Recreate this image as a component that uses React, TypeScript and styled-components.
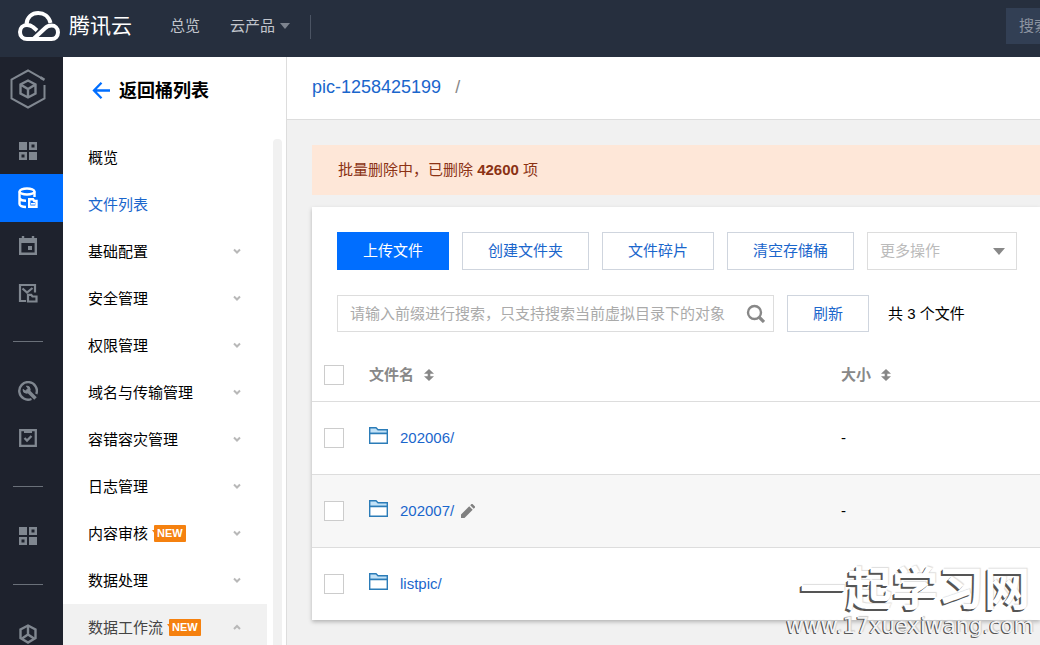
import React from "react";
import styled, { createGlobalStyle, css } from "styled-components";

const font = `"Liberation Sans", "Noto Sans CJK SC", sans-serif`;
const blue = "#006eff";
const link = "#1a66cc";

const GlobalStyle = createGlobalStyle`
  *, *::before, *::after { box-sizing: border-box; }
  body { margin: 0; background: #f1f1f1; font: 15px/20px ${font}; color: #000; }
  button, input, select { font: inherit; margin: 0; border-radius: 0; }
  a { color: inherit; text-decoration: none; }
  svg { display: block; flex: none; }
`;

const Page = styled.div`
  display: flex;
  flex-direction: column;
  height: 100vh;
  overflow: hidden;
  position: relative;
`;

const Header = styled.header`
  display: flex;
  align-items: center;
  flex: none;
  height: 57px;
  padding: 0 0 6px 18px;
  background: #262f3e;
  color: #c1c5cc;
`;

const Brand = styled.a`
  display: flex;
  align-items: center;
  gap: 9px;
  margin-right: 38px;
  font-size: 21px;
  color: #fff;
`;

const TopLink = styled.a`
  display: flex;
  align-items: center;
  gap: 5px;
  margin-right: 30px;
`;

const ProductLink = styled(TopLink)`
  margin-right: 20px;
`;

const TopDivider = styled.span`
  width: 1px;
  height: 24px;
  margin-top: 3px;
  background: #4b5463;
`;

const TopSearch = styled.input`
  width: 34px;
  height: 36px;
  margin-left: auto;
  padding: 0 0 0 13px;
  border: 0;
  background: #323f54;
  color: #fff;
  &::placeholder { color: #8c93a0; opacity: 1; }
`;

const Body = styled.div`
  display: flex;
  flex: 1;
  min-height: 0;
`;

const Rail = styled.nav`
  flex: none;
  width: 63px;
  overflow: hidden;
  background: #1e222d;
  color: #808790;
`;

const RailItem = styled.a<{ $active?: boolean; $tall?: boolean }>`
  display: flex;
  align-items: center;
  justify-content: center;
  height: ${(p) => (p.$tall ? 70 : p.$active ? 48 : 47)}px;
  padding: ${(p) => (p.$tall ? "0 7px 6px 0" : "0 7px 0 0")};
  ${(p) =>
    p.$active &&
    css`
      background: ${blue};
      color: #fff;
    `}
`;

const RailDivider = styled.hr`
  width: 30px;
  height: 1px;
  margin: 25px 0 25px 13px;
  border: 0;
  background: #6a7079;
`;

const Sidebar = styled.aside`
  display: flex;
  flex-direction: column;
  flex: none;
  width: 224px;
  border-right: 1px solid #ddd;
  background: #fff;
`;

const BackLink = styled.a`
  display: flex;
  align-items: center;
  gap: 9px;
  flex: none;
  height: 67px;
  margin-bottom: 10px;
  padding-left: 29px;
  font-size: 18px;
  line-height: 24px;
  font-weight: 700;
`;

const MenuArea = styled.div`
  display: flex;
  flex: 1;
  gap: 6px;
  min-height: 0;
  padding-right: 4px;
  overflow: hidden;
`;

const Menu = styled.ul`
  flex: 1;
  margin: 0;
  padding: 0;
  list-style: none;
`;

const MenuLink = styled.a<{ $state?: "active" | "open" }>`
  display: flex;
  align-items: center;
  height: 47px;
  padding: 0 26px 0 25px;
  color: ${(p) => (p.$state === "active" ? link : p.$state === "open" ? "#444" : "#000")};
  background: ${(p) => (p.$state === "open" ? "#f1f1f1" : "transparent")};
  svg { margin-left: auto; }
`;

const ScrollTrack = styled.div`
  width: 9px;
  margin-top: 5px;
  border-radius: 4px 4px 0 0;
  background: #f1f1f1;
`;

const NewBadge = styled.span`
  position: relative;
  height: 17px;
  margin-left: 6px;
  padding: 0 3px;
  border-radius: 1px;
  background: #f5810f;
  color: #fff;
  font-size: 11px;
  line-height: 17px;
  font-weight: 700;
  &::before {
    content: "";
    position: absolute;
    left: -2px;
    top: 5px;
    border-top: 4px solid #f5810f;
    border-left: 3px solid transparent;
  }
`;

const Main = styled.main`
  display: flex;
  flex-direction: column;
  flex: 1;
  min-width: 0;
`;

const Breadcrumb = styled.div`
  display: flex;
  align-items: center;
  gap: 14px;
  height: 63px;
  padding: 0 25px 2px;
  border-bottom: 1px solid #ddd;
  background: #fff;
  color: #888;
  font-size: 18px;
  a { color: ${link}; }
`;

const Content = styled.div`
  display: flex;
  flex-direction: column;
  gap: 12px;
  padding: 25px 0 24px 25px;
`;

const Alert = styled.div`
  padding: 15px 26px;
  background: #fee7d8;
  color: #8b3214;
`;

const Card = styled.section`
  background: #fff;
  box-shadow: 0 2px 4px rgba(0, 0, 0, 0.25);
`;

const Tools = styled.div`
  display: flex;
  flex-direction: column;
  gap: 25px;
  padding: 25px 23px 18px 25px;
`;

const ToolRow = styled.div`
  display: flex;
  align-items: center;
  gap: 13px;
`;

const Button = styled.button<{ $primary?: boolean }>`
  flex: none;
  height: 38px;
  padding: 0 25px;
  border: 1px solid ${(p) => (p.$primary ? blue : "#cfd5de")};
  background: ${(p) => (p.$primary ? blue : "#fff")};
  color: ${(p) => (p.$primary ? "#fff" : link)};
`;

const SelectBox = styled.div`
  position: relative;
  width: 150px;
  select {
    appearance: none;
    width: 100%;
    height: 38px;
    padding: 0 30px 0 12px;
    border: 1px solid #ddd;
    background: #fff;
    color: #bbb;
    opacity: 1;
  }
  svg {
    position: absolute;
    right: 12px;
    top: 16px;
    pointer-events: none;
  }
`;

const SearchBox = styled.form`
  display: flex;
  align-items: center;
  flex: 0 1 437px;
  height: 37px;
  padding: 0 8px 0 12px;
  border: 1px solid #ddd;
  input {
    flex: 1;
    min-width: 0;
    padding: 0;
    border: 0;
    outline: 0;
    background: none;
  }
  input::placeholder { color: #aaa; opacity: 1; }
  button { padding: 0; border: 0; background: none; color: #888; }
`;

const RefreshButton = styled(Button)`
  height: 37px;
`;

const Count = styled.span`
  padding-left: 6px;
`;

const Table = styled.table`
  width: 100%;
  table-layout: fixed;
  border-collapse: collapse;
  th, td { padding: 0; text-align: left; border-bottom: 1px solid #ddd; }
  th { height: 51px; color: #888; }
  td { height: 73px; }
  tbody tr:last-child td { border-bottom: 0; }
`;

const CheckCol = styled.col`
  width: 57px;
`;

const SizeCol = styled.col`
  width: 199px;
`;

const Row = styled.tr<{ $hover?: boolean }>`
  background: ${(p) => (p.$hover ? "#f7f7f7" : "#fff")};
`;

const Checkbox = styled.input`
  appearance: none;
  display: block;
  width: 20px;
  height: 20px;
  margin-left: 12px;
  border: 1px solid #ccc;
  background: #fff;
`;

const HeadLabel = styled.span`
  display: flex;
  align-items: center;
  gap: 10px;
`;

const FileCell = styled.div`
  display: flex;
  align-items: center;
  a { margin: 0 7px 0 12px; color: ${link}; }
`;

const FolderMark = styled.span`
  padding-bottom: 5px;
`;

const Watermark = styled.div`
  position: absolute;
  right: 10px;
  bottom: 7px;
  display: flex;
  flex-direction: column;
  align-items: flex-end;
  color: #fff;
  font-size: 46px;
  line-height: 50px;
  font-weight: 700;
  text-shadow: -2px 2px 0 #555, -1px 1px 0 #555, 1px -1px 1px #ddd;
  pointer-events: none;
`;

const WatermarkUrl = styled.span`
  margin-right: -4px;
  color: #f4f4f4;
  font: 21px/24px "DejaVu Sans", sans-serif;
  text-shadow: -1px 1px 0 #555, -1px 0 0 #555, 1px -1px 1px #ccc;
`;

const CloudLogo = () => (
  <svg width="42" height="32" viewBox="18 9 42 32" fill="none" stroke="#fff" strokeWidth="4">
    <path d="M26.5 23C27 16 32 12 38.2 12C44 12 49 15.7 50.5 22" />
    <path d="M37 29.5L33 26C31 24.5 29 24 27 24C23 24 20 27 20 31C20 35 23 38 27 38L51.5 38C55.5 38 58 35 58 31.3C58 27.3 55 24.5 51.5 24.5C49 24.5 47 25.3 45 27.2L34 37.5" />
  </svg>
);

const Caret = ({ color, width, height }: { color: string; width: number; height: number }) => (
  <svg width={width} height={height} viewBox="0 0 12 7" preserveAspectRatio="none">
    <path d="M0 0H12L6 7Z" fill={color} />
  </svg>
);

const HexCube = () => (
  <svg width="36" height="40" viewBox="0 0 36 40" fill="none" stroke="currentColor" strokeWidth="2">
    <path d="M34.500 16V29.500L18 38.500L1.500 29.500V10.500L18 1.500L32 9.300" />
    <path d="M30.500 8.500L34.500 10.800" strokeWidth="2.600" />
    <path d="M18 11.500L25.500 15.500V24.500L18 28.500L10.500 24.500V15.500ZM10.500 15.500L18 20L25.500 15.500M18 20V28.500" strokeWidth="2.400" />
  </svg>
);

const GridIcon = () => (
  <svg width="18" height="18" viewBox="0 0 18 18" fill="currentColor">
    <path d="M0 0H8V8H0ZM10 10H18V18H10Z" />
    <path fillRule="evenodd" d="M10 0H18V8H10ZM12.500 2.500V5.500H15.500V2.500ZM0 10H8V18H0ZM2.500 12.500V15.500H5.500V12.500Z" />
  </svg>
);

const DatabaseIcon = () => (
  <svg width="20" height="22" viewBox="0 0 20 22" fill="none" stroke="currentColor" strokeWidth="2.400">
    <ellipse cx="9" cy="4.500" rx="7.500" ry="3" />
    <path d="M1.500 4.500V17C1.500 18.500 4 20 8 20M1.500 11C2 12.500 4.500 13.700 8 13.700M16.500 4.500V10" />
    <path d="M11.200 12.200H15L16.200 14H18.500V19.800H11.200Z" />
    <path d="M13 16.800H17" strokeWidth="1.600" />
  </svg>
);

const CalendarIcon = () => (
  <svg width="18" height="20" viewBox="0 0 18 20" fill="none" stroke="currentColor" strokeWidth="2.400">
    <path d="M1.200 4V17.800H16.800V4" />
    <path d="M0 4.500H18" strokeWidth="5" />
    <path d="M4 0V3M14 0V3" strokeWidth="2.400" />
    <path d="M9 12H13" strokeWidth="4" />
  </svg>
);

const PictureFolderIcon = () => (
  <svg width="20" height="20" viewBox="0 0 20 20" fill="none" stroke="currentColor" strokeWidth="2.200">
    <path d="M8 18H2V2H17V9.500M4.500 5.500L9 9.500L14.500 5" />
    <path d="M10 11.800H13.200L14.500 13.500H18.500V18.500H10Z" />
  </svg>
);

const WrenchIcon = () => (
  <svg width="20" height="20" viewBox="0 0 20 20" fill="none" stroke="currentColor">
    <path d="M13.500 18A8.800 8.800 0 1 1 18.300 13" strokeWidth="2.400" />
    <path d="M10 10L17.500 17.500" strokeWidth="3.600" />
    <path d="M8.500 5A3.600 3.600 0 1 1 5 8.500L7.500 10L10 7.500Z" fill="currentColor" />
  </svg>
);

const TaskIcon = () => (
  <svg width="18" height="18" viewBox="0 0 18 18" fill="none" stroke="currentColor" strokeWidth="2.300">
    <path d="M1.200 1.200H16.800V16.800H1.200Z" />
    <path d="M5 2.500H13" strokeWidth="3" />
    <path d="M5.500 9L8 11.500L12.500 7" />
  </svg>
);

const CubeIcon = () => (
  <svg width="18" height="20" viewBox="0 0 18 20" fill="none" stroke="currentColor" strokeWidth="2.400">
    <path d="M9 1.500L16.500 5.500V14L9 18.500L1.500 14V5.500Z" />
    <path d="M9 2V10.500M9 10.500L3 14.500M9 10.500L15 14.500" />
  </svg>
);

const BackArrow = () => (
  <svg width="18" height="18" viewBox="0 0 18 18" fill="none" stroke={blue} strokeWidth="2.300">
    <path d="M9.500 0.800L2 8.500L9.500 16.200M2 8.500H18" />
  </svg>
);

const Chevron = ({ up }: { up?: boolean }) => (
  <svg width="8" height="8" viewBox="0 0 8 8" fill="none" stroke="#b8b8b8" strokeWidth="2">
    <path d={up ? "M1 5L4 2L7 5" : "M1 1.500L4 4.500L7 1.500"} />
  </svg>
);

const SearchIcon = () => (
  <svg width="19" height="19" viewBox="0 0 19 19" fill="none" stroke="currentColor">
    <circle cx="8.500" cy="8.500" r="6.500" strokeWidth="2.400" />
    <path d="M13 13L18 18" strokeWidth="3.200" />
  </svg>
);

const SortIcon = () => (
  <svg width="10" height="12" viewBox="0 0 10 12" fill="#888">
    <path d="M5 0L10 4.800H6.300V7.200H10L5 12L0 7.200H3.700V4.800H0Z" />
  </svg>
);

const FolderIcon = () => (
  <svg width="19" height="17" viewBox="0 0 19 17" stroke="#2b7cb8" strokeWidth="1.400">
    <path d="M0.700 6.500V0.700H7L9 2.700H18.300V6.500Z" fill="#c3e2f7" />
    <path d="M0.700 6.500H18.300V16.300H0.700Z" fill="#fff" />
  </svg>
);

const PencilIcon = () => (
  <svg width="14" height="14" viewBox="0 0 14 14" fill="#808080">
    <path d="M0 14V10.500L8.200 2.300L11.700 5.800L3.500 14ZM9.200 1.300L10.500 0Q11 -0.300 11.500 0L14 2.500Q14.300 3 14 3.500L12.700 4.800Z" />
  </svg>
);

type MenuEntry = { label: string; fold?: boolean; isNew?: boolean; state?: "active" | "open" };

const menu: MenuEntry[] = [
  { label: "概览" },
  { label: "文件列表", state: "active" },
  { label: "基础配置", fold: true },
  { label: "安全管理", fold: true },
  { label: "权限管理", fold: true },
  { label: "域名与传输管理", fold: true },
  { label: "容错容灾管理", fold: true },
  { label: "日志管理", fold: true },
  { label: "内容审核", fold: true, isNew: true },
  { label: "数据处理", fold: true },
  { label: "数据工作流", fold: true, isNew: true, state: "open" },
];

const files = [
  { name: "202006/", size: "-", hover: false },
  { name: "202007/", size: "-", hover: true },
  { name: "listpic/", size: "", hover: false },
];

export default function App() {
  return (
    <Page>
      <GlobalStyle />
      <Header>
        <Brand href="#">
          <CloudLogo />
          腾讯云
        </Brand>
        <TopLink href="#">总览</TopLink>
        <ProductLink href="#">
          云产品
          <Caret color="#7d848f" width={10} height={6} />
        </ProductLink>
        <TopDivider />
        <TopSearch type="text" placeholder="搜索" aria-label="搜索" />
      </Header>
      <Body>
        <Rail>
          <RailItem href="#" $tall><HexCube /></RailItem>
          <RailItem href="#"><GridIcon /></RailItem>
          <RailItem href="#" $active><DatabaseIcon /></RailItem>
          <RailItem href="#"><CalendarIcon /></RailItem>
          <RailItem href="#"><PictureFolderIcon /></RailItem>
          <RailDivider />
          <RailItem href="#"><WrenchIcon /></RailItem>
          <RailItem href="#"><TaskIcon /></RailItem>
          <RailDivider />
          <RailItem href="#"><GridIcon /></RailItem>
          <RailDivider />
          <RailItem href="#"><CubeIcon /></RailItem>
        </Rail>
        <Sidebar>
          <BackLink href="#">
            <BackArrow />
            返回桶列表
          </BackLink>
          <MenuArea>
            <Menu>
              {menu.map((m) => (
                <li key={m.label}>
                  <MenuLink href="#" $state={m.state}>
                    {m.label}
                    {m.isNew && <NewBadge>NEW</NewBadge>}
                    {m.fold && <Chevron up={m.state === "open"} />}
                  </MenuLink>
                </li>
              ))}
            </Menu>
            <ScrollTrack />
          </MenuArea>
        </Sidebar>
        <Main>
          <Breadcrumb>
            <a href="#">pic-1258425199</a>
            <span>/</span>
          </Breadcrumb>
          <Content>
            <Alert role="status">
              批量删除中，已删除 <b>42600</b> 项
            </Alert>
            <Card>
              <Tools>
                <ToolRow>
                  <Button $primary>上传文件</Button>
                  <Button>创建文件夹</Button>
                  <Button>文件碎片</Button>
                  <Button>清空存储桶</Button>
                  <SelectBox>
                    <select aria-label="更多操作" disabled>
                      <option>更多操作</option>
                    </select>
                    <Caret color="#888" width={12} height={7} />
                  </SelectBox>
                </ToolRow>
                <ToolRow>
                  <SearchBox>
                    <input
                      type="text"
                      aria-label="前缀搜索"
                      placeholder="请输入前缀进行搜索，只支持搜索当前虚拟目录下的对象"
                    />
                    <button type="button" aria-label="搜索">
                      <SearchIcon />
                    </button>
                  </SearchBox>
                  <RefreshButton>刷新</RefreshButton>
                  <Count>共 3 个文件</Count>
                </ToolRow>
              </Tools>
              <Table>
                <colgroup>
                  <CheckCol />
                  <col />
                  <SizeCol />
                </colgroup>
                <thead>
                  <tr>
                    <th><Checkbox type="checkbox" aria-label="全选" /></th>
                    <th><HeadLabel>文件名<SortIcon /></HeadLabel></th>
                    <th><HeadLabel>大小<SortIcon /></HeadLabel></th>
                  </tr>
                </thead>
                <tbody>
                  {files.map((f) => (
                    <Row key={f.name} $hover={f.hover}>
                      <td><Checkbox type="checkbox" aria-label={f.name} /></td>
                      <td>
                        <FileCell>
                          <FolderMark><FolderIcon /></FolderMark>
                          <a href="#">{f.name}</a>
                          {f.hover && <PencilIcon />}
                        </FileCell>
                      </td>
                      <td>{f.size}</td>
                    </Row>
                  ))}
                </tbody>
              </Table>
            </Card>
          </Content>
        </Main>
      </Body>
      <Watermark>
        一起学习网
        <WatermarkUrl>www.17xuexiwang.com</WatermarkUrl>
      </Watermark>
    </Page>
  );
}
